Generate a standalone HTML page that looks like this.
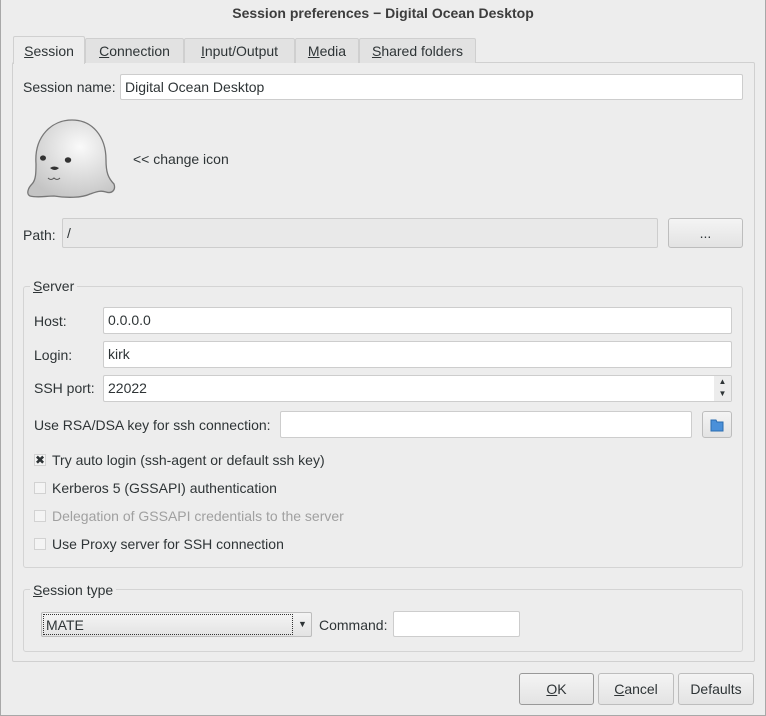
<!DOCTYPE html>
<html><head><style>
*{box-sizing:border-box}
body{margin:0;width:766px;height:716px;background:#ededed;font-family:"Liberation Sans","DejaVu Sans",sans-serif;font-size:14px;color:#2e3436;position:relative;overflow:hidden}
.a{position:absolute}
.win{left:0;top:0;width:766px;height:716px;border:1px solid #a8a8a8;border-top:none}
.title{left:0;top:0;width:766px;height:26px;text-align:center;line-height:26px;font-weight:bold;color:#3d3d3d;font-size:14px}
.inp{background:#fff;border:1px solid #cdcdcd;border-radius:2px;line-height:25px;padding-left:4px}
.tab{top:38px;height:25px;border:1px solid #cfcfcf;border-bottom:none;background:#e2e2e2;line-height:24px;text-align:center;border-radius:2px 2px 0 0}
.btn{border:1px solid #bdbdbd;border-radius:3px;background:linear-gradient(#f4f4f4,#e3e3e3);text-align:center}
.grp{border:1px solid #d4d4d4;border-radius:3px}
.cb{width:12px;height:12px;border:1px solid #d2d2d2;background:#f4f4f4}
u{text-decoration:underline}
</style></head><body>
<div class="a win"></div>
<div class="a title">Session preferences − Digital Ocean Desktop</div>
<div class="a" style="left:12px;top:62px;width:743px;height:600px;border:1px solid #d0d0d0;border-radius:2px"></div>
<div class="a tab" style="left:13px;top:36px;width:72px;height:28px;background:#ededed;border-color:#d0d0d0;line-height:28px"><u>S</u>ession</div>
<div class="a tab" style="left:85px;width:99px"><u>C</u>onnection</div>
<div class="a tab" style="left:184px;width:111px"><u>I</u>nput/Output</div>
<div class="a tab" style="left:295px;width:64px"><u>M</u>edia</div>
<div class="a tab" style="left:359px;width:117px"><u>S</u>hared folders</div>

<div class="a" style="left:23px;top:79px">Session name:</div>
<div class="a inp" style="left:120px;top:74px;width:623px;height:26px">Digital Ocean Desktop</div>

<svg class="a" style="left:26px;top:118px" width="92" height="82" viewBox="0 0 92 82">
<defs><radialGradient id="g" cx="0.6" cy="0.35" r="0.7"><stop offset="0" stop-color="#fafafa"/><stop offset="1" stop-color="#c4c4c4"/></radialGradient></defs>
<path d="M10 46 C8 18 26 2 46 2 C66 2 80 18 80 42 C80 54 82 60 88 66 C90 72 86 76 80 74 C74 72 70 74 64 76 C56 80 40 80 28 78 C20 78 12 80 4 78 C0 76 2 70 6 66 C10 62 10 54 10 46Z" fill="url(#g)" stroke="#777" stroke-width="1.3"/>
<ellipse cx="17" cy="40" rx="3" ry="2.6" fill="#333"/><ellipse cx="42" cy="42" rx="3.2" ry="2.8" fill="#333"/>
<path d="M24 50 q4 -3 9 0 q-4 4 -9 0z" fill="#333"/>
<path d="M22 60 q3 3 6 0 q3 3 6 0" stroke="#555" fill="none"/>
</svg>
<div class="a" style="left:133px;top:151px">&lt;&lt; change icon</div>

<div class="a" style="left:23px;top:227px">Path:</div>
<div class="a inp" style="left:62px;top:218px;width:596px;height:30px;background:#e9e9e9;line-height:28px">/</div>
<div class="a btn" style="left:668px;top:218px;width:75px;height:30px;line-height:28px">...</div>

<div class="a grp" style="left:23px;top:286px;width:720px;height:282px"></div>
<div class="a" style="left:30px;top:278px;background:#ededed;padding:0 3px"><u>S</u>erver</div>
<div class="a" style="left:34px;top:313px">Host:</div>
<div class="a inp" style="left:103px;top:307px;width:629px;height:27px">0.0.0.0</div>
<div class="a" style="left:34px;top:347px">Login:</div>
<div class="a inp" style="left:103px;top:341px;width:629px;height:27px">kirk</div>
<div class="a" style="left:34px;top:380px">SSH port:</div>
<div class="a inp" style="left:103px;top:375px;width:629px;height:27px">22022</div>
<div class="a" style="left:714px;top:376px;width:17px;height:25px;background:#ececec;font-size:8px;text-align:center;line-height:12px">▲<br>▼</div>
<div class="a" style="left:34px;top:417px">Use RSA/DSA key for ssh connection:</div>
<div class="a inp" style="left:280px;top:411px;width:412px;height:27px"></div>
<div class="a btn" style="left:702px;top:411px;width:30px;height:27px"><svg width="16" height="16" style="margin-top:5px"><path d="M2 3h5l1 2h6v9H2z" fill="#4a90d9" stroke="#2a6cb0"/></svg></div>
<div class="a cb" style="left:34px;top:454px;font-size:12px;line-height:10px;text-align:center;font-weight:bold">✖</div>
<div class="a" style="left:52px;top:452px">Try auto login (ssh-agent or default ssh key)</div>
<div class="a cb" style="left:34px;top:482px"></div>
<div class="a" style="left:52px;top:480px">Kerberos 5 (GSSAPI) authentication</div>
<div class="a cb" style="left:34px;top:510px"></div>
<div class="a" style="left:52px;top:508px;color:#a0a0a0">Delegation of GSSAPI credentials to the server</div>
<div class="a cb" style="left:34px;top:538px"></div>
<div class="a" style="left:52px;top:536px">Use Proxy server for SSH connection</div>

<div class="a grp" style="left:23px;top:589px;width:720px;height:63px"></div>
<div class="a" style="left:30px;top:582px;background:#ededed;padding:0 3px"><u>S</u>ession type</div>
<div class="a btn" style="left:41px;top:612px;width:271px;height:25px;border-radius:2px"></div>
<div class="a" style="left:43px;top:614px;width:250px;height:21px;border:1px dotted #333;line-height:21px;padding-left:2px">MATE</div>
<div class="a" style="left:298px;top:619px;font-size:9px">▼</div>
<div class="a" style="left:319px;top:617px">Command:</div>
<div class="a inp" style="left:393px;top:611px;width:127px;height:26px"></div>

<div class="a btn" style="left:519px;top:673px;width:75px;height:32px;line-height:30px;border-color:#999"><u>O</u>K</div>
<div class="a btn" style="left:598px;top:673px;width:76px;height:32px;line-height:30px"><u>C</u>ancel</div>
<div class="a btn" style="left:678px;top:673px;width:76px;height:32px;line-height:30px">Defaults</div>
</body></html>
